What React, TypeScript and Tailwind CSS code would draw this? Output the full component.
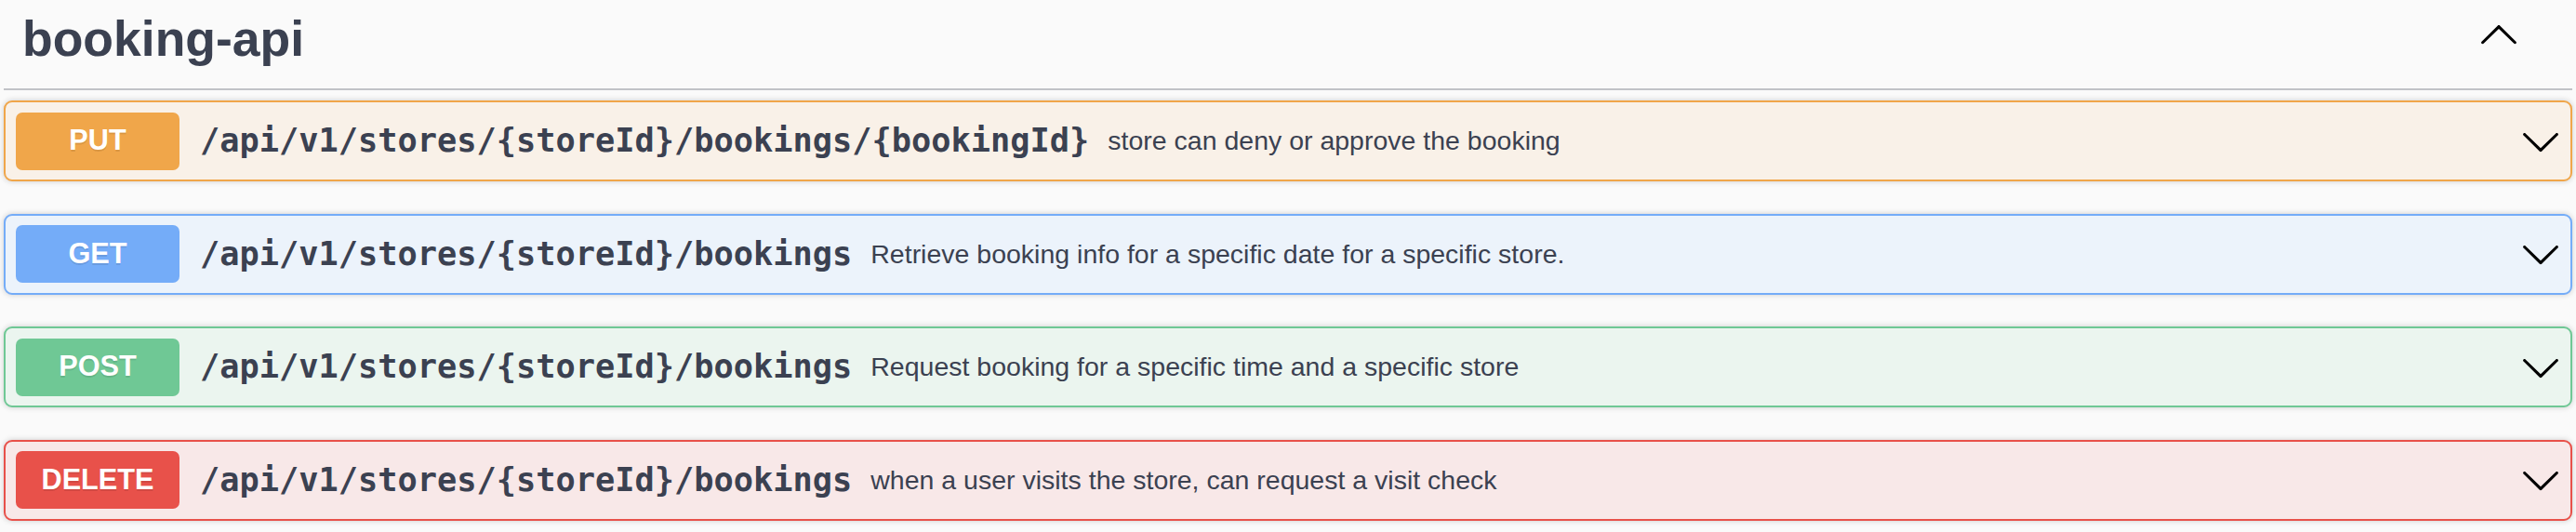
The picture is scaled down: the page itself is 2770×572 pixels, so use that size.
const operations = [
  {
    method: 'PUT',
    path: '/api/v1/stores/{storeId}/bookings/{bookingId}',
    summary: 'store can deny or approve the booking',
    box: 'bg-[#f9f1e8] border-[#f0a64a]',
    badge: 'bg-[#f0a64a]',
  },
  {
    method: 'GET',
    path: '/api/v1/stores/{storeId}/bookings',
    summary: 'Retrieve booking info for a specific date for a specific store.',
    box: 'bg-[#ecf3fb] border-[#74acf8]',
    badge: 'bg-[#74acf8]',
  },
  {
    method: 'POST',
    path: '/api/v1/stores/{storeId}/bookings',
    summary: 'Request booking for a specific time and a specific store',
    box: 'bg-[#ebf5ef] border-[#6fc895]',
    badge: 'bg-[#6fc895]',
  },
  {
    method: 'DELETE',
    path: '/api/v1/stores/{storeId}/bookings',
    summary: 'when a user visits the store, can request a visit check',
    box: 'bg-[#f8e8e8] border-[#e8514a]',
    badge: 'bg-[#e8514a]',
  },
]

function ArrowUp() {
  return (
    <svg width="44" height="44" viewBox="0 0 20 20" aria-hidden="true">
      <path d="M17.418 14.908c.272.268.709.268.979 0s.271-.701 0-.969l-7.908-7.83c-.27-.268-.707-.268-.979 0l-7.908 7.83c-.27.268-.27.701 0 .969.271.268.709.268.979 0L10 7.767l7.418 7.141z" />
    </svg>
  )
}

function ArrowDown() {
  return (
    <svg width="44" height="44" viewBox="0 0 20 20" aria-hidden="true">
      <path d="M17.418 6.109c.272-.268.709-.268.979 0s.271.701 0 .969l-7.908 7.83c-.27.268-.707.268-.979 0l-7.908-7.83c-.27-.268-.27-.701 0-.969.271-.268.709-.268.979 0L10 13.25l7.418-7.141z" />
    </svg>
  )
}

export default function App() {
  return (
    <div className="h-[572px] w-full overflow-hidden bg-[#fafafa] px-[4px] text-[#3b4151] font-['Liberation_Sans',Arial,sans-serif]">
      <div className="flex h-[97px] items-start justify-between border-b-2 border-[#c1c3c7]">
        <h3 className="mt-[12px] pl-[20px] text-[53.5px] font-bold leading-[60px]">
          booking-api
        </h3>
        <button className="mt-[14px] mr-[57px] text-black" aria-label="Collapse operation">
          <ArrowUp />
        </button>
      </div>

      <div className="mt-[11px] flex flex-col gap-[34.5px]">
        {operations.map((op) => (
          <div
            key={op.method}
            className={`flex h-[87px] items-center rounded-[9px] border-2 pl-[11px] pr-[10px] shadow-[0_0_6px_rgba(0,0,0,0.19)] ${op.box}`}
          >
            <span
              className={`flex h-[62px] w-[176px] shrink-0 items-center justify-center rounded-[7px] text-[30.7px] font-bold text-white [text-shadow:0_2px_0_rgba(0,0,0,0.1)] ${op.badge}`}
            >
              {op.method}
            </span>
            <span className="pl-[22px] pr-[20px] font-['DejaVu_Sans_Mono',monospace] text-[35.3px] font-bold whitespace-nowrap">
              {op.path}
            </span>
            <span className="flex-1 text-[28.5px] whitespace-nowrap">{op.summary}</span>
            <ArrowDown />
          </div>
        ))}
      </div>
    </div>
  )
}
